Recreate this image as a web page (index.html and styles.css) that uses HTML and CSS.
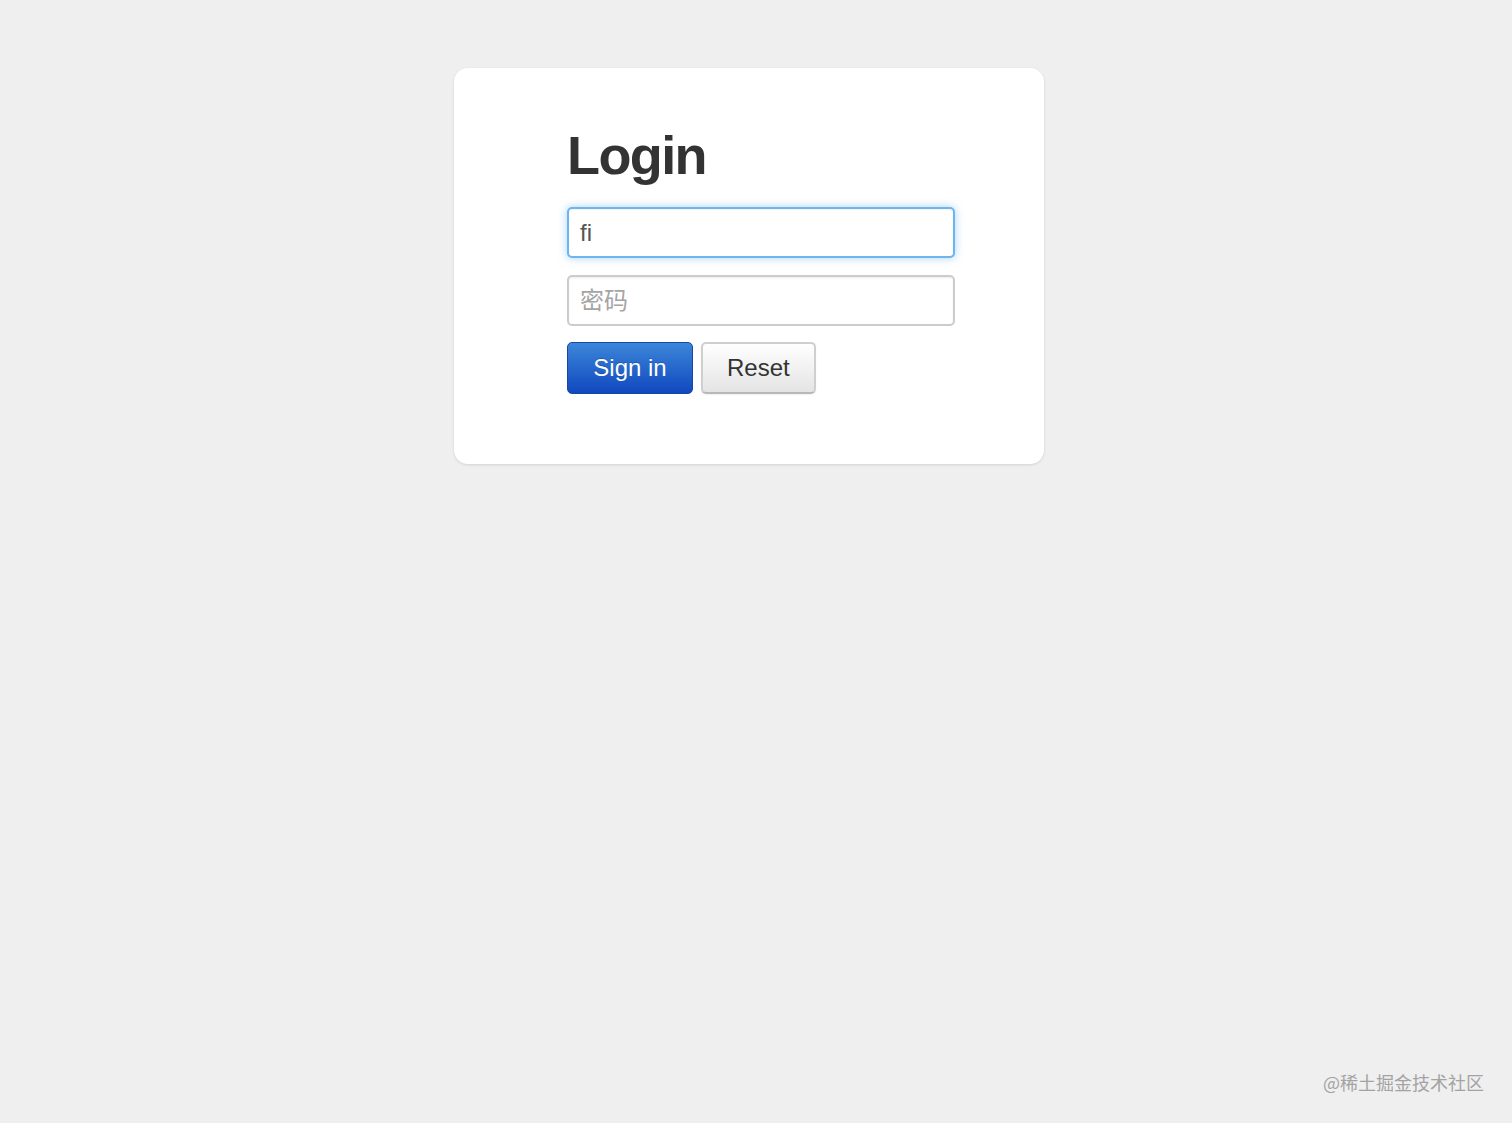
FILE: index.html
```html
<!DOCTYPE html>
<html lang="zh">
<head>
<meta charset="utf-8">
<title>Login</title>
<link rel="stylesheet" href="styles.css">
</head>
<body>
<div class="page">
  <form class="card">
    <h1 class="title">Login</h1>
    <input class="field field-focus" type="text" value="fi">
    <input class="field" type="password" placeholder="密码">
    <div class="actions">
      <button type="button" class="btn btn-primary">Sign in</button>
      <button type="button" class="btn btn-default">Reset</button>
    </div>
  </form>
</div>
<div class="watermark">@稀土掘金技术社区</div>
</body>
</html>
```

FILE: styles.css
```css
html, body {
  margin: 0;
  padding: 0;
  background: #efefef;
  font-family: "Liberation Sans", Arial, "Noto Sans CJK SC", sans-serif;
  color: #333;
  height: 100%;
}

.page {
  display: flex;
  justify-content: center;
  padding: 68px 14px 0 0;
}

.card {
  width: 590px;
  box-sizing: border-box;
  background: #fff;
  border-radius: 14px;
  padding: 60px 89px 70px 113px;
  box-shadow: 0 1px 3px rgba(0, 0, 0, 0.12);
  display: flex;
  flex-direction: column;
}

.title {
  margin: 0 0 25px 0;
  font-size: 54px;
  line-height: 1;
  font-weight: bold;
  color: #333;
  letter-spacing: -1.6px;
}

.field {
  width: 388px;
  height: 51px;
  box-sizing: border-box;
  border: 2px solid #cccccc;
  border-radius: 5px;
  padding: 0 11px;
  font-family: "Liberation Sans", Arial, "Noto Sans CJK SC", sans-serif;
  font-size: 24px;
  color: #555;
  background: #fff;
  box-shadow: inset 0 1px 2px rgba(0, 0, 0, 0.08);
  outline: none;
  margin: 0 0 17px 0;
}

.field::placeholder {
  color: #a5a5a5;
}

.field-focus {
  border-color: rgba(82, 168, 236, 0.85);
  box-shadow: inset 0 1px 2px rgba(0, 0, 0, 0.06), 0 0 8px rgba(82, 168, 236, 0.5);
}

.actions {
  display: flex;
  gap: 8px;
  margin-top: -1px;
}

.btn {
  height: 52px;
  box-sizing: border-box;
  padding: 0 24px;
  font-family: "Liberation Sans", Arial, sans-serif;
  font-size: 24px;
  border-radius: 5px;
  cursor: pointer;
}

.btn-primary {
  color: #fff;
  background: linear-gradient(#3b86d8, #1148bf);
  border: 1px solid #1746a3;
  text-shadow: 0 -1px 0 rgba(0, 0, 0, 0.2);
  min-width: 126px;
}

.btn-default {
  color: #333;
  background: linear-gradient(#ffffff, #e4e4e4);
  border: 2px solid #cfcfcf;
  border-bottom-color: #b8b8b8;
  box-shadow: 0 1px 2px rgba(0, 0, 0, 0.06);
  min-width: 114px;
}

.watermark {
  position: absolute;
  right: 28px;
  bottom: 28px;
  font-family: "Noto Sans CJK SC", sans-serif;
  font-size: 18px;
  color: #a3a3a3;
}
```
